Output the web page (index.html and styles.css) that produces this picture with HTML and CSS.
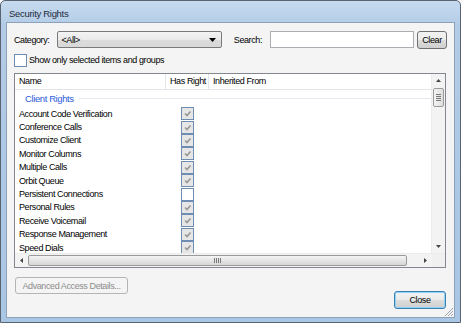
FILE: index.html
```html
<!DOCTYPE html>
<html lang="en">
<head>
    <meta charset="UTF-8">
    <title>Security Rights</title>
    <link rel="stylesheet" href="styles.css">
</head>
<body>
    <div class="window">
        <div class="titlebar">Security Rights</div>

        <div class="client">
            <div class="filter-row">
                <label class="lbl">Category:</label>
                <div class="combo">
                    <span>&lt;All&gt;</span>
                    <svg width="7" height="4" viewBox="0 0 7 4"><path d="M0 0h7L3.5 4z" fill="#000"/></svg>
                </div>
                <label class="lbl search-lbl">Search:</label>
                <div class="search-box"></div>
                <button class="btn clear-btn">Clear</button>
            </div>

            <div class="only-row">
                <span class="check empty"></span>
                <span>Show only selected items and groups</span>
            </div>

            <div class="list">
                <div class="list-main">
                    <div class="list-view">
                        <div class="list-head">
                            <div class="col col-name">Name</div>
                            <div class="col col-right">Has Right</div>
                            <div class="col col-inh">Inherited From</div>
                        </div>
                        <div class="group">
                            <span>Client Rights</span>
                            <div class="group-line"></div>
                        </div>
                        <div class="items">
                            <div class="item"><span class="item-name">Account Code Verification</span><span class="check on"></span></div>
                            <div class="item"><span class="item-name">Conference Calls</span><span class="check on"></span></div>
                            <div class="item"><span class="item-name">Customize Client</span><span class="check on"></span></div>
                            <div class="item"><span class="item-name">Monitor Columns</span><span class="check on"></span></div>
                            <div class="item"><span class="item-name">Multiple Calls</span><span class="check on"></span></div>
                            <div class="item"><span class="item-name">Orbit Queue</span><span class="check on"></span></div>
                            <div class="item"><span class="item-name">Persistent Connections</span><span class="check empty"></span></div>
                            <div class="item"><span class="item-name">Personal Rules</span><span class="check on"></span></div>
                            <div class="item"><span class="item-name">Receive Voicemail</span><span class="check on"></span></div>
                            <div class="item"><span class="item-name">Response Management</span><span class="check on"></span></div>
                            <div class="item"><span class="item-name">Speed Dials</span><span class="check on"></span></div>
                            <div class="item"><span class="item-name">Status Notes</span><span class="check on"></span></div>
                        </div>
                    </div>
                    <div class="vscroll">
                        <div class="arrow"><svg width="5" height="3" viewBox="0 0 5 3"><path d="M0 3h5L2.5 0z" fill="#444"/></svg></div>
                        <div class="vthumb"><i></i><i></i><i></i><i></i></div>
                        <div class="vtrack"></div>
                        <div class="arrow"><svg width="5" height="3" viewBox="0 0 5 3"><path d="M0 0h5L2.5 3z" fill="#444"/></svg></div>
                    </div>
                </div>
                <div class="hscroll">
                    <div class="arrow"><svg width="3" height="5" viewBox="0 0 3 5"><path d="M3 0v5L0 2.5z" fill="#444"/></svg></div>
                    <div class="hthumb"><i></i><i></i><i></i><i></i></div>
                    <div class="htrack"></div>
                    <div class="arrow"><svg width="3" height="5" viewBox="0 0 3 5"><path d="M0 0v5L3 2.5z" fill="#444"/></svg></div>
                    <div class="corner"></div>
                </div>
            </div>

            <div class="footer">
                <button class="btn adv-btn" disabled>Advanced Access Details...</button>
                <button class="btn close-btn">Close</button>
            </div>
            <div class="grip">
                <svg width="10" height="10" viewBox="0 0 10 10">
                    <path d="M9 1L1 9M9 4L4 9M9 7L7 9" stroke="#9aa4b0" stroke-width="1"/>
                </svg>
            </div>
        </div>
    </div>
</body>
</html>
```

FILE: styles.css
```css
body {
    margin: 0;
    padding: 0;
    font-family: "Liberation Sans", Arial, sans-serif;
    font-size: 9px;
    letter-spacing: -0.4px;
    color: #000;
    background: #fff;
}

.window {
    width: 461px;
    height: 323px;
    box-sizing: border-box;
    border: 1px solid #5a6470;
    border-radius: 5px 5px 0 0;
    background: linear-gradient(to bottom, #c7dbef 0%, #b2cbe6 25px, #a9c6e4 100%);
    display: flex;
    flex-direction: column;
    padding: 0 5px 4px 5px;
}

.titlebar {
    height: 21px;
    line-height: 25px;
    padding-left: 3px;
    font-size: 9.5px;
    letter-spacing: -0.3px;
    color: #1e2a3a;
    flex-shrink: 0;
    white-space: nowrap;
}

.client {
    flex: 1;
    position: relative;
    background: #f4f4f4;
    border: 1px solid #8da2b8;
    padding: 8px 7px 8px 7px;
    display: flex;
    flex-direction: column;
}

.filter-row {
    display: flex;
    align-items: center;
    height: 17px;
    white-space: nowrap;
}

.lbl {
    margin-right: 8px;
    color: #000;
}

.combo {
    width: 155px;
    height: 15px;
    border: 1px solid #7a7a7a;
    border-radius: 2px;
    background: linear-gradient(to bottom, #f4f4f4 0%, #eaeaea 50%, #dcdcdc 51%, #d8d8d8 100%);
    display: flex;
    align-items: center;
    justify-content: space-between;
    padding: 0 5px 0 3px;
    box-sizing: content-box;
}

.search-lbl {
    margin-left: auto;
    margin-right: 8px;
}

.search-box {
    width: 142px;
    height: 15px;
    background: #fff;
    border: 1px solid #abadb3;
    margin-right: 3px;
}

.btn {
    font-family: "Liberation Sans", Arial, sans-serif;
    font-size: 9px;
    letter-spacing: -0.4px;
    border: 1px solid #707070;
    border-radius: 3px;
    background: linear-gradient(to bottom, #f2f2f2 0%, #ebebeb 50%, #dddddd 51%, #cfcfcf 100%);
    color: #000;
    padding: 0;
    white-space: nowrap;
}

.clear-btn {
    width: 30px;
    height: 18px;
}

.only-row {
    display: flex;
    align-items: center;
    margin-top: 5px;
    height: 14px;
    white-space: nowrap;
}

.only-row .check {
    margin-right: 2px;
}

.check {
    display: inline-block;
    width: 11px;
    height: 11px;
    border: 1px solid #8e8f8f;
    background: linear-gradient(135deg, #dcdcdc, #fafafa);
    flex-shrink: 0;
    box-sizing: content-box;
}

.check.empty {
    border-color: #6d8db2;
    background: #fff;
}

.check.on {
    border-color: #6d8db2;
    background: #e6e6e6 url("data:image/svg+xml,%3Csvg xmlns='http://www.w3.org/2000/svg' width='11' height='11'%3E%3Cpath d='M3 5.5l2 2 3.5-4' fill='none' stroke='%23979797' stroke-width='1.6'/%3E%3C/svg%3E") no-repeat center;
}

.list {
    margin-top: 6px;
    margin-right: 1px;
    height: 195px;
    box-sizing: border-box;
    border: 1px solid #828790;
    background: #fff;
    display: flex;
    flex-direction: column;
}

.list-main {
    flex: 1;
    display: flex;
    min-height: 0;
}

.list-view {
    flex: 1;
    overflow: hidden;
    white-space: nowrap;
}

.list-head {
    display: flex;
    height: 15px;
    border-bottom: 1px solid #e3e3ea;
    align-items: center;
}

.col {
    padding-left: 4px;
    height: 100%;
    line-height: 15px;
    box-sizing: border-box;
}

.col-name {
    width: 151px;
    border-right: 1px solid #e3e3ea;
}

.col-right {
    width: 43px;
    border-right: 1px solid #e3e3ea;
}

.col-inh {
    flex: 1;
}

.group {
    display: flex;
    align-items: center;
    height: 17px;
    padding-left: 10px;
    color: #2c5bd8;
    font-size: 9.5px;
}

.group-line {
    flex: 1;
    height: 1px;
    margin-left: 5px;
    background: #e4e8f0;
}

.item {
    display: flex;
    align-items: center;
    height: 13.4px;
    padding-left: 4px;
}

.item-name {
    width: 162px;
}

.vscroll {
    width: 13px;
    background: #f3f3f3;
    border-left: 1px solid #ececec;
    display: flex;
    flex-direction: column;
}

.arrow {
    height: 13px;
    width: 13px;
    display: flex;
    align-items: center;
    justify-content: center;
    flex-shrink: 0;
}

.vthumb {
    height: 17px;
    margin: 1px 1px 0 1px;
    border: 1px solid #9a9a9a;
    border-radius: 2px;
    background: linear-gradient(to right, #f4f4f4, #dedede);
    display: flex;
    flex-direction: column;
    align-items: center;
    justify-content: center;
    gap: 1px;
}

.vthumb i {
    width: 5px;
    height: 1px;
    background: #777;
}

.vtrack {
    flex: 1;
}

.hscroll {
    height: 13px;
    display: flex;
    background: #f3f3f3;
    border-top: 1px solid #ececec;
}

.hthumb {
    width: 377px;
    margin: 1px 0;
    border: 1px solid #9a9a9a;
    border-radius: 2px;
    background: linear-gradient(to bottom, #f4f4f4, #d6d6d6);
    display: flex;
    align-items: center;
    justify-content: center;
    gap: 1px;
}

.hthumb i {
    width: 1px;
    height: 5px;
    background: #777;
}

.htrack {
    flex: 1;
}

.corner {
    width: 13px;
    background: #f0f0f0;
}

.footer {
    flex: 1;
    display: flex;
    justify-content: space-between;
    padding-top: 9px;
    padding-right: 1px;
}

.adv-btn {
    width: 113px;
    height: 17px;
    color: #8d8d8d;
    border-color: #b5b5b5;
    background: #f4f4f4;
    margin-left: 1px;
    align-self: flex-start;
}

.close-btn {
    width: 52px;
    height: 18px;
    align-self: flex-end;
    border-color: #3c7fb1;
    box-shadow: inset 0 0 0 1px #8fd3f6;
}

.grip {
    position: absolute;
    right: 0;
    bottom: 0;
    width: 10px;
    height: 10px;
}
```
